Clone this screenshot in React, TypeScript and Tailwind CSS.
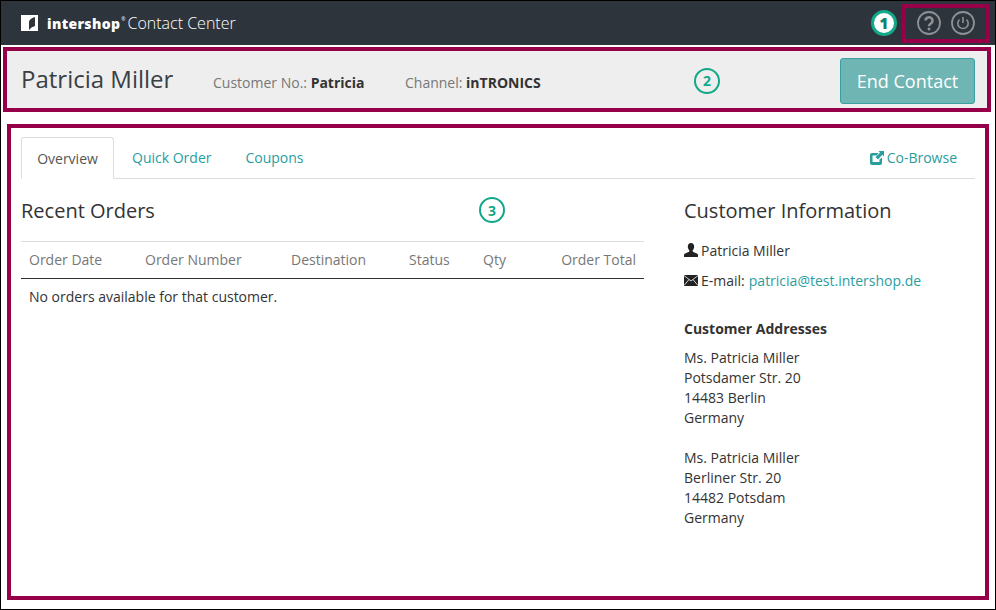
import React from 'react';

const Badge: React.FC<{ n: number; white?: boolean }> = ({ n, white }) => (
  <span
    className={`flex h-[26px] w-[26px] items-center justify-center rounded-full border-[#13a88a] ${
      white ? 'border-[3px] bg-white text-[15px] font-extrabold text-[#0f7f6a]' : 'border-[2px] text-[14px] font-bold text-[#13a88a]'
    }`}
  >
    {n}
  </span>
);

const columns = [
  { label: 'Order Date', cls: 'w-[116px]' },
  { label: 'Order Number', cls: 'w-[146px]' },
  { label: 'Destination', cls: 'w-[118px]' },
  { label: 'Status', cls: 'w-[74px]' },
  { label: 'Qty', cls: 'w-[50px]' },
];

const App: React.FC = () => {
  return (
    <div className="relative flex h-[610px] w-[996px] flex-col overflow-hidden border border-black bg-white font-['Open_Sans',sans-serif] text-[14px] text-[#333]">
      <header className="flex h-[44px] shrink-0 items-center justify-between bg-[#2d343b] pr-[5px] pl-[20px]">
        <div className="flex items-center">
          <svg width="17" height="16" viewBox="0 0 17 16" className="mr-[9px]">
            <rect width="17" height="16" fill="#fff" />
            <path d="M8 15V7q0-3 6-5V11q-4 1-6 4z" fill="#2d343b" />
          </svg>
          <span className="text-[14px] font-extrabold tracking-[0.35px] text-white">intershop</span>
          <span className="mb-[6px] ml-[1px] text-[5px] text-white">®</span>
          <span className="ml-[2px] text-[16px] font-light text-white">Contact Center</span>
        </div>
        <div className="flex items-center gap-[5px]">
          <Badge n={1} white />
          <div className="flex h-[39px] w-[88px] items-center justify-center gap-[10px] border-[4px] border-[#960048]">
            <svg width="24" height="24" viewBox="0 0 24 24" fill="none" stroke="#8d9196" strokeWidth="1.800">
              <circle cx="12" cy="12" r="11" />
              <path d="M8.500 9.500a3.500 3.300 0 1 1 5.500 2.800c-1.300.9-2 1.500-2 2.900" strokeWidth="2.600" />
              <circle cx="12" cy="18" r="1.500" fill="#8d9196" stroke="none" />
            </svg>
            <svg width="24" height="24" viewBox="0 0 24 24" fill="none" stroke="#8d9196" strokeWidth="1.800">
              <circle cx="12" cy="12" r="11" />
              <path d="M8.500 8.500a5.200 5.200 0 1 0 7 0M12 6v6" strokeWidth="1.600" />
            </svg>
          </div>
        </div>
      </header>

      <section className="mt-[2px] mr-[4px] ml-[2px] flex h-[65px] shrink-0 items-center border-[4px] border-[#960048] bg-[#eee] pr-[12px] pl-[14px]">
        <h1 className="mb-[2px] w-[192px] text-[24px] text-[#3a3f44]">Patricia Miller</h1>
        <span className="mt-[5px] w-[192px] text-[#777]">
          Customer No.: <b className="text-[#333]">Patricia</b>
        </span>
        <span className="mt-[5px] w-[289px] text-[#777]">
          Channel: <b className="text-[#333]">inTRONICS</b>
        </span>
        <span className="mt-[2px]">
          <Badge n={2} />
        </span>
        <button className="mt-[2px] ml-auto h-[46px] w-[135px] rounded-[3px] border border-[#3a9fa0] bg-[#6fb5b3] pt-[1px] text-[18px] text-white">
          End Contact
        </button>
      </section>

      <main className="mx-[6px] mt-[12px] flex flex-1 flex-col border-[4px] border-[#960048] bg-white px-[10px] pt-[9px]">
        <nav className="flex h-[42px] shrink-0 items-stretch border-b border-[#ddd] pr-[1px] text-[#2a9d9f]">
          <span className="-mb-[1px] flex w-[93px] items-center justify-center rounded-t-[3px] border border-[#ddd] border-b-white text-[#555]">
            Overview
          </span>
          <span className="ml-[18px] flex items-center">Quick Order</span>
          <span className="ml-[34px] flex items-center">Coupons</span>
          <span className="mr-[17px] ml-auto flex items-center gap-[3px]">
            <svg width="14" height="14" viewBox="0 0 14 14" fill="#2a9d9f">
              <path
                fillRule="evenodd"
                d="M2 2h6.500L6.500 4.500H3a.5.5 0 0 0-.5.500v5.500a.5.5 0 0 0 .5.500h6a.5.5 0 0 0 .5-.5V8.500l2.500-2V12a2 2 0 0 1-2 2H2a2 2 0 0 1-2-2V4a2 2 0 0 1 2-2z"
              />
              <path d="M8.500 0H14v5.500l-1.800-1.800L8 8.500 5.500 6 10 1.700z" />
            </svg>
            Co-Browse
          </span>
        </nav>

        <div className="flex flex-1">
          <div className="w-[623px] shrink-0">
            <div className="flex h-[62px] items-start pt-[18px]">
              <h2 className="w-[458px] text-[20px] leading-[28px] text-[#333]">Recent Orders</h2>
              <Badge n={3} />
            </div>
            <div className="flex h-[38px] items-center border-y border-t-[#ddd] border-b-[#333] px-[8px] pb-[2px] text-[#777]">
              {columns.map((c) => (
                <span key={c.label} className={c.cls}>
                  {c.label}
                </span>
              ))}
              <span className="flex-1 text-right">Order Total</span>
            </div>
            <p className="px-[8px] pt-[8px] leading-[20px]">No orders available for that customer.</p>
          </div>

          <aside className="ml-[40px] flex-1">
            <h2 className="pt-[18px] text-[20px] leading-[28px] text-[#333]">Customer Information</h2>
            <div className="mt-[15px] flex h-[20px] items-center gap-[3px]">
              <svg width="14" height="14" viewBox="0 0 14 14" fill="#222">
                <path d="M7 0c2 0 3.200 1.500 3.200 3.600 0 1.700-.7 3-1.500 3.800-.3.600 0 1.200.6 1.500 1.700.8 4.700 1.500 4.700 3V14H0v-2.100c0-1.500 3-2.200 4.700-3 .6-.3.900-.9.600-1.500C4.500 6.600 3.800 5.300 3.800 3.600 3.800 1.500 5 0 7 0z" />
              </svg>
              Patricia Miller
            </div>
            <div className="mt-[10px] flex h-[20px] items-center gap-[3px]">
              <svg width="14" height="11" viewBox="0 0 14 11" fill="#222" stroke="#fff" strokeWidth="0.800">
                <rect width="14" height="11" stroke="none" />
                <path d="M0 .5l7 5.500 7-5.500M0 10.500l5-6M14 10.500l-5-6" fill="none" />
              </svg>
              E-mail: <a className="ml-[1px] text-[#2a9d9f]">patricia@test.intershop.de</a>
            </div>
            <h3 className="mt-[29px] text-[14px] leading-[20px] font-bold text-[#333]">Customer Addresses</h3>
            <p className="mt-[9px] leading-[20px]">
              Ms. Patricia Miller
              <br />
              Potsdamer Str. 20
              <br />
              14483 Berlin
              <br />
              Germany
            </p>
            <p className="mt-[20px] leading-[20px]">
              Ms. Patricia Miller
              <br />
              Berliner Str. 20
              <br />
              14482 Potsdam
              <br />
              Germany
            </p>
          </aside>
        </div>
      </main>
      <div className="h-[9px] shrink-0" />
    </div>
  );
};

export default App;
